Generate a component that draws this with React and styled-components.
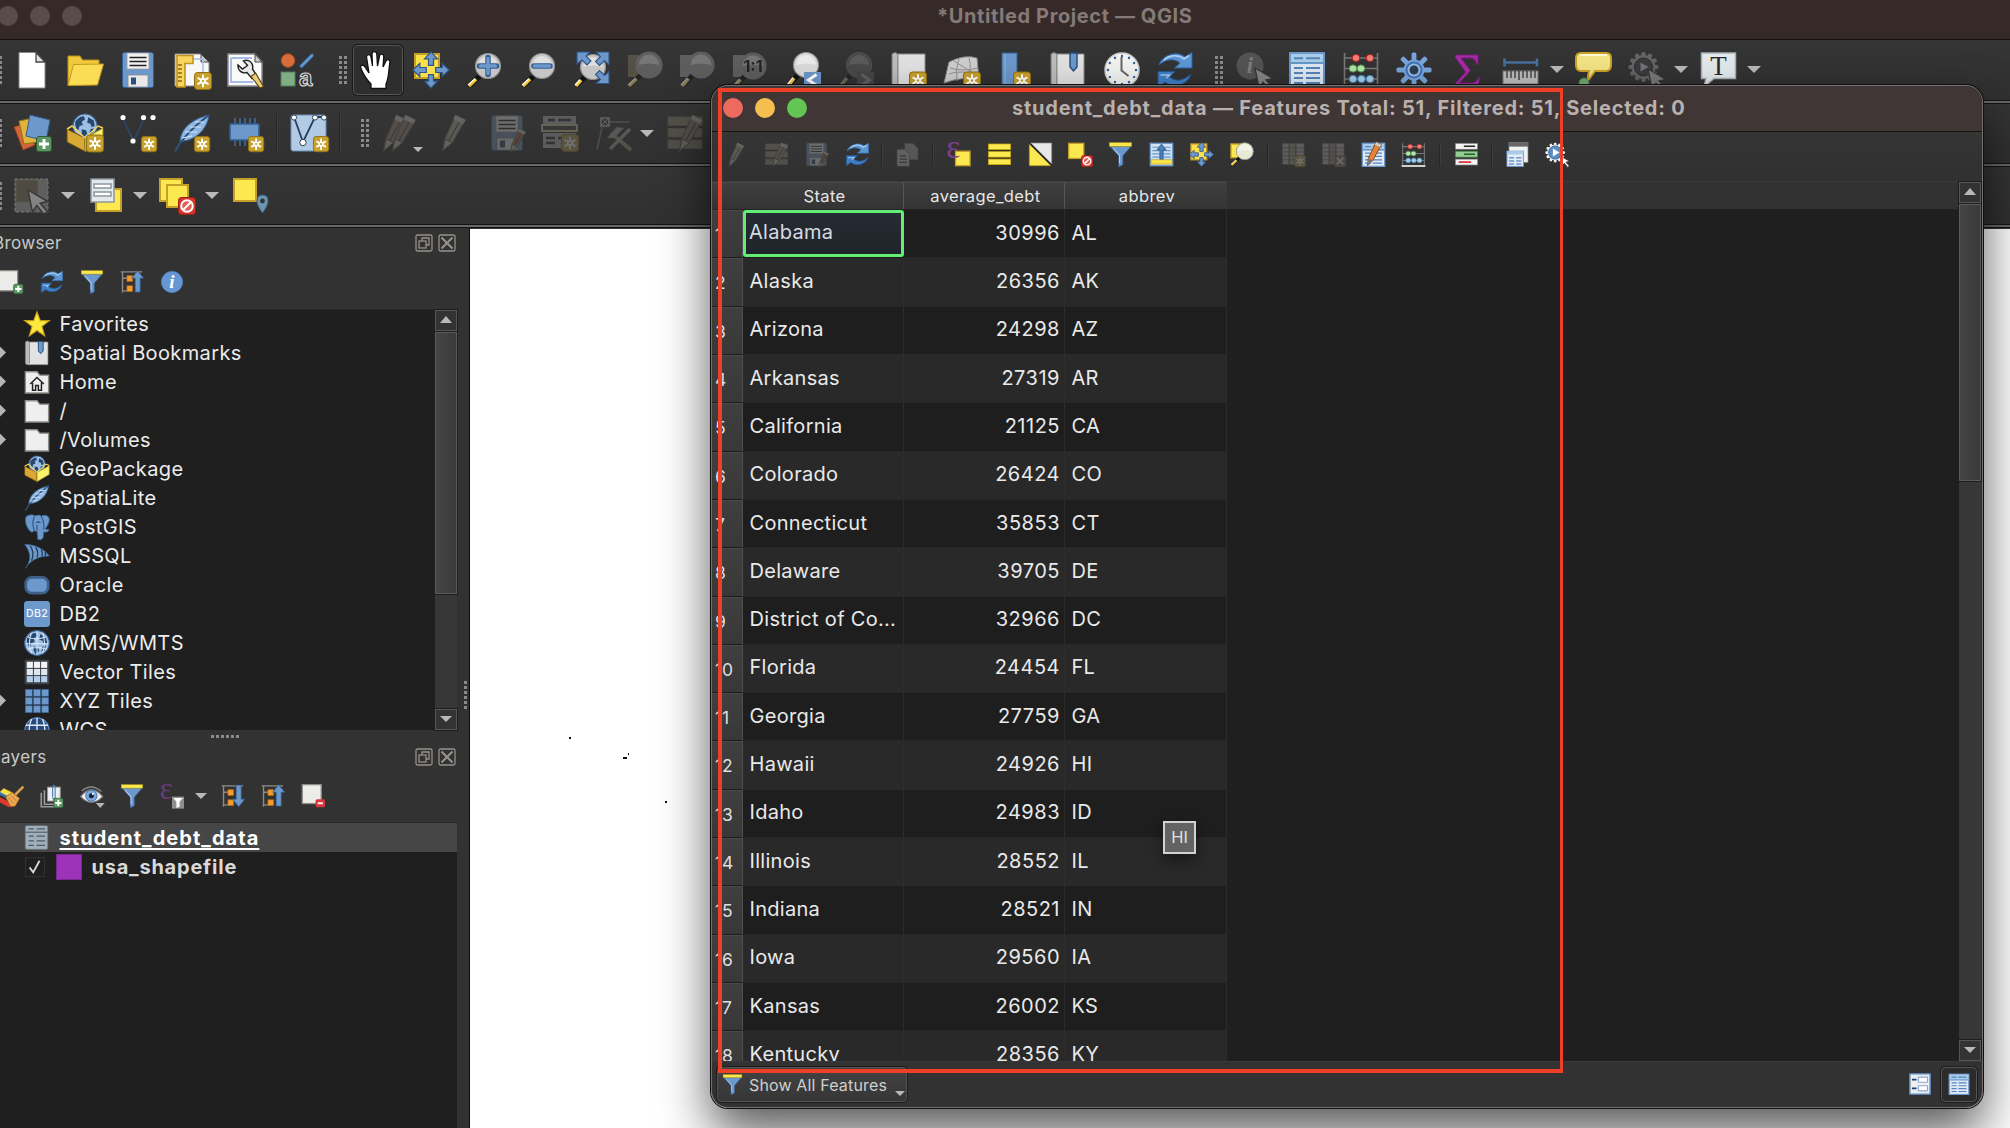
import React from 'react';
import styled, { createGlobalStyle, css } from 'styled-components';

const Global = createGlobalStyle`
  *, *::before, *::after { box-sizing: border-box; }
  html, body { margin: 0; padding: 0; background: #1f1f1f; overflow: hidden; }
  body { font-family: Inter, "Liberation Sans", sans-serif; color: #e6e6e6; }
`;

/* ---------- icon fragments, all on a 38 x 38 board ---------- */

const BLUE = '#6d98cb';
const DEEP = '#2f5585';

const Spark = ({ x = 20, y = 20.5, s = 1 }) => (
  <g transform={`translate(${x} ${y}) scale(${s})`}>
    <rect x="0.5" y="0.5" width="17" height="17" rx="3" fill="#c8a02c" stroke="#8f6f14" />
    <g stroke="#fff" strokeWidth="2" strokeLinecap="round">
      <path d="M9 3.4v11.2M4.2 6.200l9.600 5.600M13.800 6.200l-9.600 5.600" />
    </g>
    <circle cx="9" cy="9" r="3" fill="#fff" />
    <circle cx="9" cy="9" r="1.2" fill="#c8a02c" />
  </g>
);
const Plus = ({ x = 22, y = 22, s = 1 }) => (
  <g transform={`translate(${x} ${y}) scale(${s})`}>
    <rect x="0.5" y="0.5" width="15" height="15" rx="2.5" fill="#5b9661" stroke="#2f5c35" />
    <path d="M8 3v10M3 8h10" stroke="#fff" strokeWidth="3" />
  </g>
);
const NoEntry = ({ x = 20, y = 20, s = 1 }) => (
  <g transform={`translate(${x} ${y}) scale(${s})`}>
    <rect x="0.5" y="0.5" width="17" height="17" rx="3" fill="#d8352c" stroke="#9c1a14" />
    <circle cx="9" cy="9" r="5.8" fill="#e2605a" stroke="#fff" strokeWidth="2" />
    <path d="M5 13l8-8" stroke="#fff" strokeWidth="2" />
  </g>
);
const Lens = ({ cx = 23, cy = 15, r = 12.5, fill = '#c6c6c6' }) => (
  <>
    <path d={`M${cx - r * 0.6} ${cy + r * 0.75}L4 35`} stroke="#111" strokeWidth="5" />
    <path d={`M${cx - r * 0.95} ${cy + r * 1.05}L4 35`} stroke="#f4c533" strokeWidth="3.4" />
    <path d={`M${cx - r * 1.05} ${cy + r * 1.02}L3 34`} stroke="#fff" strokeWidth="1.2" />
    <circle cx={cx} cy={cy} r={r} fill={fill} stroke="#8f8f8f" strokeWidth="1.2" />
    <path d={`M${cx - r * 0.8} ${cy}A${r * 0.8} ${r * 0.8} 0 0 1 ${cx + r * 0.8} ${cy}Q${cx} ${cy - 3} ${cx - r * 0.8} ${cy}z`} fill="#fff" opacity=".45" />
  </>
);
const Pencil = ({ x = 0, body = '#b9a77c' }) => (
  <g transform={`translate(${x} 0)`}>
    <path d="M16.500 1l10 5-13 22.500L3.500 37 6 24.500z" fill={body} stroke="#6a6150" strokeWidth="1.2" />
    <path d="M16.500 1l10 5-2.300 4-9.800-5z" fill="#d8d4cc" />
    <path d="M20 8.500L9.500 27" stroke="#3d382c" strokeWidth="1" />
    <path d="M6 25l7.500 3.500L3.500 37z" stroke="#55503f" strokeWidth="1" fill="#cfcabd" />
  </g>
);
const Globe = ({ cx = 19, cy = 12, r = 11 }) => (
  <g transform={`translate(${cx} ${cy}) scale(${r / 11})`}>
    <circle r="11" fill="#9dbfe4" stroke="#3b6493" strokeWidth="1" />
    <path d="M-9-4c3-4 6-5 8-5l1 3-3 2 1 3-3 1-1 4-2-2-1-3zM3-8l5 3 1 5-3 1-1-3-3-1zM-3 3l4 1 1 3-3 3-2-3zM5 3l3-1-1 4-3 2z" fill="#26486f" />
  </g>
);
const Cursor = ({ x = 20, y = 18, fill = '#8c8c8c', edge = '#3a3a3a', s = 1 }) => (
  <path transform={`translate(${x} ${y}) scale(${s})`} d="M0 0l18 10.500-7 1.500 6.500 7.500-3 2.500-6.500-8-4 6z" fill={fill} stroke={edge} strokeWidth="1.3" />
);
const CrossArrows = () => (
  <g fill={BLUE} stroke={DEEP} strokeWidth="1.2">
    <path d="M19 0.8l6.5 7h-4v6.500h-5v-6.500h-4z" />
    <path d="M19 37.2l6.5-7h-4v-6.5h-5v6.5h-4z" />
    <path d="M0.8 19l7-6.5v4h6.500v5h-6.500v4z" />
    <path d="M37.2 19l-7-6.5v4h-6.500v5h6.500v4z" />
  </g>
);
const GearShape = ({ cx = 19, cy = 19, r = 10, teeth = 8, len = 7, w = 5, fill = BLUE, hole = '#333' }) => (
  <g>
    {Array.from({ length: teeth }, (_, i) => (
      <rect key={i} x={cx - w / 2} y={cy - r - len + 1} width={w} height={len + 2} rx="1.6" fill={fill} transform={`rotate(${(360 / teeth) * i} ${cx} ${cy})`} />
    ))}
    <circle cx={cx} cy={cy} r={r} fill={fill} />
    <circle cx={cx} cy={cy} r={r * 0.45} fill={hole} />
  </g>
);
const Abacus = () => (
  <>
    <path d="M2.5 2v34M35.5 2v34M2 7h34M2 17.5h34M2 28h34" stroke="#787878" strokeWidth="1.6" />
    <path d="M1 36.5h36" stroke="#cfcfcf" strokeWidth="3" />
    {[[14, 7, 'r'], [28, 7, 'r'], [11, 17.5, 'g'], [19, 17.5, 'g'], [11, 28, 'b'], [19.5, 28, 'b'], [28, 28, 'b']].map(([x, y, c]) => (
      <ellipse key={`${x}-${y}`} cx={x} cy={y} rx="3.8" ry="3.6" fill={{ r: '#f07f79', g: '#b3e6ab', b: '#a3cdea' }[c]} stroke={{ r: '#b81f1b', g: '#4f9a4a', b: '#4a86b4' }[c]} />
    ))}
  </>
);
const TableSheet = () => (
  <>
    <rect x="2" y="2" width="34" height="35" fill="#dfeaf6" stroke={BLUE} strokeWidth="2" />
    <rect x="3" y="3" width="32" height="8.5" fill="#a9cdea" />
    <path d="M3 12h32" stroke="#4c84bf" strokeWidth="1.6" />
    <path d="M6 7.2h9M18 7.2h14M6 17h9M18 17h14M6 22h9M18 22h14M6 27h9M18 27h14M6 32h9M18 32h14" stroke="#5585bb" strokeWidth="1.9" />
  </>
);
const Sync = () => (
  <>
    <path d="M3 14C6 4 21-1 29 6l7-4.500V17H18.500l5.500-5C18 7 10 8 3 14z" fill="#5d97d6" stroke="#2d65a4" />
    <path d="M35 23c-3 11-18 15-26 8l-7 5V20.500h17l-5.500 5.500c6 5 14 4 21.500-3z" fill="#3e7ec6" stroke="#24588f" />
    <path d="M8 9c5-5 14-6 20-1l5-3.500" fill="none" stroke="#b3d2f2" strokeWidth="1.6" />
    <path d="M4.500 24h9l-3 3" fill="none" stroke="#a4c8ee" strokeWidth="1.6" />
  </>
);
const Funnel = () => (
  <>
    <path d="M3 6.500h32L22.500 21v13.500l-6 3V21z" fill={BLUE} stroke="#3c6ba3" strokeWidth="1.2" />
    <path d="M8 9.500l9.500 11v12" fill="none" stroke="#b2cdea" strokeWidth="1.6" />
    <rect x="2" y="1" width="34" height="5.500" fill="#fbe64b" stroke="#b79b17" strokeWidth=".8" />
  </>
);
const Box = () => (
  <>
    <Globe cx={19} cy={12} r={12} />
    <path d="M1 15l18 9v13.500L1 28z" fill="#d9a936" stroke="#6b4d0c" />
    <path d="M37 14l-18 10v13.500L37 27z" fill="#fbf36b" stroke="#8b7b18" />
    <path d="M1 15l5-3 13 12M37 14l-5-2-13 12" fill="none" stroke="#efd25c" strokeWidth="1.5" />
  </>
);
const Feather = () => (
  <>
    <path d="M36 1C24 4 8 11 7 28l3-1C22 26 34 16 36 1z" fill="#8fb6e2" stroke="#3d6797" />
    <path d="M36 1C24 10 10 22 2 37.500" fill="none" stroke="#2c527d" strokeWidth="2" />
    <path d="M31 8l-9 0M28 13l-11 0M24 18l-12 0M19 22l-10 2" stroke="#d3e5f7" strokeWidth="1.2" />
  </>
);
const Folder = ({ children }) => (
  <>
    <path d="M2 4h17l4 5h13v26H2z" fill="#efefef" stroke="#8e8e88" strokeWidth="2" />
    {children}
  </>
);
const BookIcon = ({ tag }) => (
  <>
    <path d="M2 3q3-3 6 0V36H4q-2 0-2-3z" fill="#bdbdbd" stroke="#777" />
    <path d="M8 3h27v33H6q2-1 2-4z" fill="#e2e2e2" stroke="#8c8c8c" />
    {tag && <path d="M21 2h7v14l-3.500 4-3.500-4z" fill={BLUE} stroke="#234c7d" strokeWidth="1.400" />}
  </>
);
const TreeLines = () => (
  <>
    <path d="M1 3h34M4 3v33M4 13h8M4 33h8" stroke="#8b8b8b" strokeWidth="2.2" fill="none" />
    <rect x="11" y="9" width="9" height="9" fill="#f39b2d" stroke="#b86a10" />
    <rect x="11" y="25" width="9" height="9" fill="#f39b2d" stroke="#b86a10" />
  </>
);
const Save = () => (
  <>
    <rect x="3.500" y="1.500" width="31" height="35" rx="2" fill={BLUE} stroke="#2f5f96" />
    <rect x="8" y="2" width="22" height="16" fill="#f1f1f1" stroke="#999" strokeWidth=".8" />
    <path d="M10.500 6.500h17M10.500 10.500h17M10.500 14.500h17" stroke="#222" strokeWidth="1.400" />
    <rect x="9" y="24" width="20" height="12" fill="#e9e9e9" stroke="#888" strokeWidth=".8" />
    <rect x="12" y="26.500" width="5" height="7" fill="#27507f" />
  </>
);
const Rows = ({ fill = '#fce94f', edge = '#c4a000' }) => (
  <>
    {[3, 14.500, 26].map((y) => <rect key={y} x="2" y={y} width="34" height="8.500" fill={fill} stroke={edge} />)}
  </>
);
const Sq = ({ x, y, w = 22, h = 23 }) => (
  <rect x={x} y={y} width={w} height={h} fill="#fce94f" stroke="#c4a02a" strokeWidth="2" />
);

const ICONS = {
  newFile: <><path d="M6 1.500h17l9 9.500v26H6z" fill="#fff" stroke="#8a8a8a" /><path d="M23 1.500l0 9.500h9z" fill="#e3e3e3" stroke="#444" strokeWidth="1.300" /></>,
  open: <><path d="M2 34V5h12l2.500 4H33v7H9z" fill="#f0c83c" stroke="#b98f18" /><path d="M2 34.500L7.500 13.500 37.500 13l-6 21z" fill="#fbdc55" stroke="#c39a20" /></>,
  save: <Save />,
  newLayout: <><path d="M2 3h26l8 8v24H2z" fill="#f8f8f8" stroke="#8b8b8b" /><path d="M28 3v8h8z" fill="#ccc" stroke="#444" /><path d="M15 8h15v14" fill="none" stroke="#a7bce6" strokeWidth="1.500" /><path d="M4 4.500h16v8h-8V36H4z" fill="#f6d560" stroke="#c39318" strokeWidth="1.600" /><path d="M5 14h4M5 18h4M5 22h4M5 26h4M5 30h4" stroke="#8d6a10" strokeWidth="1.300" /><Spark x={21} y={21} /></>,
  wrench: <><path d="M2 3h27l7 8v24H2z" fill="#fafafa" stroke="#8b8b8b" strokeWidth="1.500" /><path d="M29 3v8h7z" fill="#ccc" stroke="#444" /><path d="M5 7h21M5 7v24h22" fill="none" stroke="#a7bce6" strokeWidth="2" /><path d="M17.500 10c5-2.500 10.500 2 9 8l4 6-4.500 3.500-5-6c-5 1.500-9.500-2-9-7.500l4.500 4 5-3.500z" fill="#e9e9e9" stroke="#222" strokeWidth="1.400" /><path d="M29.500 22l8 13.500-3.500 1.500-9-11.500z" fill="#ebcd78" stroke="#5b4a18" strokeWidth="1.200" /></>,
  style: <><ellipse cx="9" cy="9.500" rx="6.800" ry="6.800" fill="#d86c3a" stroke="#a34a20" /><path d="M33 4.500L22.500 15" stroke="#2f5f96" strokeWidth="4" strokeLinecap="round" /><path d="M33 4.500L22.500 15" stroke={BLUE} strokeWidth="2.400" strokeLinecap="round" /><rect x="2" y="21" width="14" height="14" fill="#7fae85" stroke="#4e7f55" /><text x="20" y="35" fontFamily="Liberation Sans, sans-serif" fontWeight="700" fontSize="24" fill="#333" stroke="#ddd" strokeWidth="1.100">a</text></>,
  hand: <path d="M12 37.500v-4.500C8 29 4.500 24 1.800 17c-1-3 2.500-4 4.200-1l4 6-2.500-16c0-3.300 4-3.300 4.500 0l1.500 9-.5-12c0-3.300 4.500-3.300 4.800 0l.7 12 2-10c.8-3 4.600-2.400 4.300 1l-.8 10 3-6c1.500-2.500 4.700-1.200 3.800 1.800C29.500 20 30 27 27 33v4.500z" fill="#fff" stroke="#111" strokeWidth="1.300" />,
  panSel: <><rect x="3" y="3" width="24" height="24" fill="#fbe04a" stroke="#c4a02a" strokeWidth="2" /><CrossArrows /></>,
  zoomIn: <><Lens /><path d="M23 6.500v17M14.500 15h17" stroke="#315c93" strokeWidth="5.500" strokeLinecap="round" /><path d="M23 7.500v15M15.500 15h15" stroke={BLUE} strokeWidth="3.400" strokeLinecap="round" /></>,
  zoomOut: <><Lens /><path d="M15 15h16" stroke="#315c93" strokeWidth="5.500" strokeLinecap="round" /><path d="M15.500 15h15" stroke={BLUE} strokeWidth="3.400" strokeLinecap="round" /></>,
  zoomFull: <><Lens cx={21} cy={16} r={12.5} /><g fill={BLUE} stroke={DEEP} strokeWidth="1.100"><path d="M5 1h13l-4 4 5 5-4 4-5-5-5 4z" /><path d="M37 1v13l-4.500-4.500-5 5-4-4 5-5-4.500-4.500z" /><path d="M37 32.500H24l4.500-4-5-5 4-4 5 5 4.500-4z" /></g></>,
  zoomSel: <><rect x="3" y="4" width="18" height="22" fill="#7b7148" /><Lens cx={24} cy={14} r={13} fill="#8d8d8d" /></>,
  zoomLayer: <><rect x="2" y="4" width="18" height="22" fill="#8d8d8d" /><Lens cx={23} cy={14} r={13} fill="#8d8d8d" /></>,
  zoomNative: <><rect x="2" y="4" width="18" height="22" fill="#8d8d8d" /><Lens cx={22} cy={15} r={13} fill="#8d8d8d" /><text x="22" y="21" textAnchor="middle" fontFamily="Inter, sans-serif" fontWeight="700" fontSize="16" fill="#111">1:1</text></>,
  zoomPrev: <><Lens cx={22} cy={14} r={12.5} fill="#dcdcdc" /><rect x="20" y="21" width="17" height="17" fill={BLUE} /><path d="M32.500 23.500l-8 5.500 8 5.500" fill="none" stroke="#fff" strokeWidth="3" /></>,
  zoomNext: <><Lens cx={22} cy={14} r={12.5} fill="#7d7d7d" /><rect x="20" y="21" width="17" height="17" fill="#6a7380" /><path d="M24.500 23.500l8 5.500-8 5.500" fill="none" stroke="#ccc" strokeWidth="3" /></>,
  newMap: <><BookIcon /><Spark x={19} y={20.5} /></>,
  new3d: <><path d="M6 11q16-8 28-4l2 22q-16-4-35 3z" fill="#cfcfcf" stroke="#888" /><path d="M7 17q12 4 28 0M6 23q10-4 29 0M16 8q-4 10-2 22M26 7q3 10-1 22M11 10l22 14" fill="none" stroke="#909090" /><Spark x={20} y={20.5} /></>,
  newBookmark: <><path d="M6 2h15v30l-7.500 6H6z" fill={BLUE} stroke="#35659c" /><path d="M9 3v31" stroke="#8fb4dd" /><Spark x={17} y={20.5} /></>,
  bookmarks: <BookIcon tag />,
  clock: <><circle cx="19" cy="19" r="17" fill="#f3f3f1" stroke="#c9c9c9" strokeWidth="1.500" />{Array.from({ length: 12 }, (_, i) => <circle key={i} cx="19" cy="5" r="1.200" fill="#2c5f9e" transform={`rotate(${i * 30} 19 19)`} />)}<path d="M18.500 6v13.500l7 5.500" fill="none" stroke="#666" strokeWidth="2" /></>,
  sync: <Sync />,
  identify: <><circle cx="15" cy="15" r="13.500" fill="#777" /><text x="15" y="22" textAnchor="middle" fontFamily="Liberation Serif, serif" fontStyle="italic" fontWeight="700" fontSize="23" fill="#ccc">i</text><Cursor x={20} y={17} fill="#ddd" /></>,
  table: <TableSheet />,
  abacus: <Abacus />,
  gear: <><GearShape r={10.5} len={8} w={4.8} fill="#78a5dc" hole="#2d3e55" /><circle cx="19" cy="19" r="7.500" fill="none" stroke="#3f74b3" strokeWidth="2" /><circle cx="19" cy="19" r="5.500" fill="none" stroke="#9fc0e8" strokeWidth="1.500" /></>,
  sigma: <path d="M7.500 4H30v9.500h-1.500C27.500 8 25 7 21 7h-8l9.500 12.500L11.500 32H23c4 0 6-2 7.500-5.500H32L29.500 36H6v-2l11.500-13L7 6z" fill="#a62ca6" stroke="#7b1a7b" />,
  ruler: <><path d="M2 11.500h33M2.500 7.500v8M35 7.500v8" stroke="#49709e" strokeWidth="2.500" /><rect x="1" y="20" width="35" height="13" fill="#bdbdbd" stroke="#777" /><path d="M5 20v7M9 20v7M13 20v7M17 20v9M21 20v7M25 20v7M29 20v7M33 20v7" stroke="#333" strokeWidth="1.300" /></>,
  bubble: <><path d="M6 2h25q5 0 5 5v7q0 6-5 6H20l-8 11 2-11H6q-5 0-5-6V7q0-5 5-5z" fill="#f3e486" stroke="#c9a227" strokeWidth="2" /><path d="M5 4h27" stroke="#fffbd9" strokeWidth="1.800" /><ellipse cx="9" cy="32" rx="5" ry="5" fill="#72a873" stroke="#4b7a4c" /></>,
  action: <><GearShape cx={15.5} cy={16} r={12} teeth={12} len={4} w={4.2} fill="#999" hole="#777" /><circle cx="15.500" cy="16" r="9" fill="#3f4650" stroke="#222" /><path d="M12.500 11.500l8 4.500-8 4.500z" fill="#bbb" /><Cursor x={20} y={18} fill="#c4c4c4" /></>,
  textNote: <><path d="M1.500 2h34v25.500H14L4 36l2-8.500H1.500z" fill="#e4e9ec" stroke="#a9b1b5" strokeWidth="1.500" /><text x="18.500" y="24" textAnchor="middle" fontFamily="Liberation Serif, serif" fontSize="27" fill="#2b2b2b">T</text></>,
  addLayers: <><path d="M1 13l12-4 9 22-12 5z" fill="#d0673a" stroke="#8f3d1a" /><path d="M6 7l14-3 5 24-14 2z" fill="#e0b33c" stroke="#90701a" /><path d="M17 1l20 5-4 21-20-5z" fill={BLUE} stroke="#355f92" /><Plus x={23} y={22} /></>,
  geopackageNew: <><Box /><Spark x={20} y={20.5} /></>,
  shapeNew: <><path d="M4 5L14 26M15 26L25 5" stroke="#2d4764" strokeWidth="1.800" /><circle cx="4" cy="3.500" r="2.600" fill="#fff" /><circle cx="14" cy="27" r="2.600" fill="#fff" /><circle cx="24.500" cy="3.500" r="2.600" fill="#fff" /><circle cx="34" cy="3.500" r="2.600" fill="#fff" /><Spark x={22} y={22} s={0.9} /></>,
  featherNew: <><Feather /><Spark x={21} y={22} s={0.9} /></>,
  memory: <><path d="M9 4v28M14 4v28M19 4v28M24 4v28M29 4v28" stroke="#456a95" strokeWidth="1.600" /><rect x="4" y="10" width="29" height="16" rx="1" fill={BLUE} stroke="#2f5f96" strokeWidth="1.600" /><Spark x={22} y={22} s={0.9} /></>,
  meshNew: <><rect x="1" y="1" width="35" height="36" rx="2" fill="#b3cae4" stroke="#6a8db5" /><path d="M4 3l9 25L25 3h9" fill="none" stroke="#23405f" strokeWidth="1.800" /><circle cx="4" cy="3.500" r="2.600" fill="#fff" stroke="#345" /><circle cx="25" cy="3.500" r="2.600" fill="#fff" stroke="#345" /><circle cx="34" cy="3.500" r="2.600" fill="#fff" stroke="#345" /><circle cx="13" cy="28.500" r="3.200" fill="#fff" stroke="#345" /><Spark x={23} y={22} s={0.9} /></>,
  pencils: <><Pencil x={-2} body="#a98a78" /><Pencil x={7} body="#a98a78" /></>,
  pencil: <Pencil x={4} body="#b9b08c" />,
  saveEdit: <><Save /><g transform="translate(19 14) scale(.65)"><Pencil body="#c06a4a" x={2} /></g></>,
  addRecord: <><rect x="2" y="2" width="33" height="8" fill="#bbb" /><rect x="1" y="11" width="35" height="6" fill="#444" stroke="#e0d080" strokeWidth="2" /><rect x="2" y="19" width="33" height="15" fill="#bbb" /><path d="M7 6h7M17 6h13M5 24h9M17 24h10M5 29h9" stroke="#333" strokeWidth="2.400" /><Spark x={20} y={20} /></>,
  digitize: <><path d="M3 36L8 13M14 8h22" stroke="#8a8a8a" strokeWidth="1.500" /><rect x="7" y="4" width="8" height="8" fill="none" stroke="#ccc" strokeWidth="1.500" /><path d="M7 4l8 8M15 4l-8 8" stroke="#ccc" /><path d="M17 19l20 17" stroke="#a89a68" strokeWidth="4" /><path d="M36 15L16 35" stroke="#aaa" strokeWidth="3.500" /><path d="M13 24l10-11 7 1-10 10z" fill="#aaa" /></>,
  multiEdit: <><Rows fill="#9b9472" edge="#857c50" /><g transform="translate(10 0)"><Pencil body="#a98a78" /></g></>,
  selectRect: <><rect x="2" y="2" width="33" height="33" fill="#8e8e8e" stroke="#c2c2c2" strokeDasharray="3 2" /><rect x="3" y="3" width="22" height="22" fill="#6f6846" stroke="#8d865a" /><Cursor x={15} y={13} fill="#ddd" s={1.1} /></>,
  selectForm: <><Sq x={9} y={12} w={25} h={22} /><rect x="4" y="2" width="23" height="23" fill="#e3e9ec" stroke="#8c979e" strokeWidth="1.500" /><path d="M7 7h17v4H7zM7 15h17v4H7z" fill="#fff" stroke="#8c979e" strokeWidth="1.500" /></>,
  deselect: <><Sq x={1} y={2} w={22} h={22} /><Sq x={8} y={8} w={21} h={22} /><NoEntry x={19} y={20} /></>,
  selectLoc: <><Sq x={2} y={2} w={22} h={22} /><path d="M30.500 18q6 0 5.500 7-.5 4-5.500 11-5-7-5.500-11-.5-7 5.500-7z" fill="#6b95b3" stroke="#3d627e" /><circle cx="30.500" cy="24" r="2.400" fill="#333" /></>,
  star: <path d="M19 1l4.800 13h13.400L26.300 22.500l4 14L19 28.500l-11.300 8 4-14L.8 14h13.400z" fill="#fbe93f" stroke="#c39b17" strokeWidth="1.600" />,
  home: <Folder><path d="M9 22L19 12.500 29 22M12.500 20v11h4.500v-7h4v7h4.500V20" fill="none" stroke="#222" strokeWidth="2.200" /></Folder>,
  folder: <Folder />,
  geopackage: <Box />,
  feather: <Feather />,
  elephant: <><path d="M3 4C8 0 14 1 16 3c3-2 7-2 9 0 6-3 12 0 12 5 0 6-4 11-6 14l6 1c-2 4-6 4-8 3l-1 9q-4 5-8 2l-1-12c-2 1-3 0-4-1l-3 3C5 24 0 11 3 4z" fill={BLUE} stroke="#35608f" strokeWidth="1.200" /><path d="M15 4q-4 10 0 20M25 3q5 8 4 20M18 13q3-3 6 0M19 16v8" fill="none" stroke="#28507e" strokeWidth="1.500" /></>,
  mssql: <><path d="M1 2c14 0 28 6 36 17-12 0-26 4-35 18C12 25 9 12 1 2z" fill={BLUE} stroke="#35608f" /><path d="M9 4q7 10 2 22M17 6q5 8 2 15M25 9q3 6 1 10M31 13q1 3 0 6" fill="none" stroke="#1f3652" strokeWidth="1.800" /></>,
  oracle: <rect x="2.500" y="8" width="33" height="23" rx="9" fill={BLUE} stroke="#3e5f87" strokeWidth="4" />,
  db2: <><rect x="0" y="0" width="38" height="38" rx="5" fill={BLUE} /><text x="19" y="23.500" textAnchor="middle" fontFamily="Inter, sans-serif" fontWeight="500" fontSize="15.500" fill="#f4f7fb">DB2</text></>,
  wms: <><Globe cx={19} cy={19} r={18} /><path d="M5 10q12 6 28 0M3 20h32M5 28q14-5 28 0M19 2v34M11 4q-6 15 0 30M27 4q6 15 0 30" fill="none" stroke="#dbe9f7" strokeWidth="1.500" /></>,
  vtiles: <><rect x="1" y="1" width="36" height="36" fill="#3c4148" />{[0, 1, 2].map((r) => [0, 1, 2].map((c) => <rect key={`${r}${c}`} x={4 + c * 10.5} y={4 + r * 10.5} width="9" height="9" fill={['#f4f4f6', '#dfe8f2', '#b4cfe9'][r]} />))}</>,
  xyz: <>{[0, 1, 2].map((r) => [0, 1, 2].map((c) => <rect key={`${r}${c}`} x={2 + c * 12} y={2 + r * 12} width="10" height="10" fill={BLUE} stroke="#39659b" strokeWidth=".8" />))}</>,
  wcs: <><circle cx="19" cy="19" r="17.500" fill="#27497a" stroke="#5e8cc2" strokeWidth="2" /><path d="M3 12h32M1 20h36M19 1v36M11 3q-7 16 0 32M27 3q7 16 0 32" fill="none" stroke="#dfe9f5" strokeWidth="2" /></>,
  addBrowser: <><rect x="-4" y="1" width="32" height="32" fill="#ececea" stroke="#8b8b84" strokeWidth="2" /><Plus x={21} y={22} /></>,
  funnel: <Funnel />,
  collapse: <><TreeLines /><path d="M28 1l9.500 12h-5.500v22h-8V13h-5.500z" fill={BLUE} stroke="#2f5f96" strokeWidth="1.200" /></>,
  expand: <><TreeLines /><path d="M28 36l9.500-12h-5.500V2h-8v22h-5.500z" fill={BLUE} stroke="#2f5f96" strokeWidth="1.200" /></>,
  info: <><circle cx="19" cy="19" r="17" fill="#6797d3" stroke="#4475b1" /><text x="19" y="29" textAnchor="middle" fontFamily="Liberation Serif, serif" fontStyle="italic" fontWeight="700" fontSize="30" fill="#fff">i</text></>,
  brush: <><path d="M-2 14l8-7 14 7-6 8z" fill="#f8e24b" stroke="#c9a227" /><path d="M-2 14l14 7 3-3" stroke="#3d74b3" strokeWidth="4" fill="none" /><path d="M-2 20l16 8 6 6-6 3-16-9z" fill="#dc3a2d" /><path d="M9 21l10-8 12 10-7 12-7 1z" fill="#eba850" stroke="#a0601c" /><path d="M13 22l9 9M17 18l9 9" stroke="#b87524" strokeWidth="1.200" /><path d="M24 17L37 4" stroke="#dba24b" strokeWidth="4" /></>,
  group: <><path d="M2 14v22h20M7 10v22h20" fill="none" stroke="#9b9b9b" strokeWidth="2.500" /><rect x="12" y="5" width="20" height="22" fill="#efefef" stroke="#999" strokeWidth="1.500" /><path d="M20 20V4q2-4 4 0v18q-4 4-4-1" fill="none" stroke="#4f7fb8" strokeWidth="1.800" /><Plus x={21} y={22} /></>,
  eye: <><path d="M1 20Q18-2 36 20 18 38 1 20z" fill="#f0f0f0" stroke="#777" strokeWidth="2" /><circle cx="18" cy="18.500" r="9" fill="#7ca8dd" stroke="#3f6b9f" strokeWidth="1.500" /><circle cx="18" cy="18.500" r="4" fill="#16263c" /><circle cx="20.500" cy="15.500" r="1.800" fill="#fff" /><path d="M3 11Q18-2 34 12" fill="none" stroke="#888" strokeWidth="2" /><path d="M25 30h14l-7 8z" fill="#b5b5b5" /></>,
  epsFilter: <><text x="-1" y="23" fontFamily="Liberation Serif, serif" fontWeight="400" fontSize="50" fill="#6b3a78">ε</text><rect x="19" y="20" width="19" height="19" fill="#8f8f8f" /><path d="M21 22h15l-5 6v8l-5 2v-10z" fill="#fff" /></>,
  removeLayer: <><rect x="2" y="1" width="30" height="30" fill="#ececea" stroke="#8b8b84" strokeWidth="2" /><rect x="23" y="24" width="15" height="13" rx="3" fill="#d9363a" /><path d="M26.500 30.500h8" stroke="#fff" strokeWidth="3" /></>,
  attrLayer: <><rect x="2" y="1" width="34" height="36" rx="2" fill="#9fafbb" stroke="#6b7b87" /><path d="M2 11h34" stroke="#5d6b76" strokeWidth="2" /><path d="M7 6h8M19 6h13M7 17h8M19 17h13M7 24h8M19 24h13M7 31h8M19 31h13" stroke="#4e5b66" strokeWidth="2" /></>,
  copy: <><path d="M15 2h12l8 8v17H15z" fill="#aaa" stroke="#666" /><path d="M3 11h12l7 7v19H3z" fill="#ccc" stroke="#555" /><path d="M7 21h10M7 26h11M7 31h11" stroke="#444" strokeWidth="2" /></>,
  epsSelect: <><Sq x={13} y={14} w={22} h={22} /><text x="-1" y="24" fontFamily="Liberation Serif, serif" fontSize="50" fill="#7d3f8d">ε</text></>,
  selectAll: <Rows />,
  invert: <><path d="M2 3v33h33z" fill="#fce94f" stroke="#a98f1f" /><path d="M4 1.500h32v32z" fill="#e7e7e7" stroke="#888" /><path d="M3 2.500l33 33" stroke="#222" strokeWidth="1.800" /></>,
  deselectOne: <><Sq x={1} y={2} w={23} h={23} /><NoEntry x={20} y={20} /></>,
  moveTop: <><rect x="2" y="2" width="34" height="34" fill="#cfe2f5" stroke={BLUE} strokeWidth="2" /><path d="M5 8h28M5 13h28M5 18h28M5 23h28" stroke="#6c96c7" strokeWidth="1.800" /><rect x="3" y="27" width="32" height="6.500" fill="#fbe54b" stroke="#b99c1a" /><path d="M19 3l7 9h-4.500v14h-5V12H12z" fill="#4d80ba" stroke="#234c7d" /></>,
  zoomSelOn: <><Sq x={3} y={3} w={17} h={21} /><Lens cx={24} cy={14} r={13} fill="#e9e9d6" /></>,
  newField: <><rect x="2" y="2" width="10" height="32" fill="#bbb" stroke="#666" /><rect x="13" y="2" width="9" height="32" fill="#a3a77d" stroke="#666" /><rect x="23" y="2" width="12" height="32" fill="#bbb" stroke="#666" /><path d="M3 9h31M3 15h31M3 21h31M3 27h31" stroke="#555" /><Spark x={20} y={20} /></>,
  delField: <><rect x="2" y="2" width="10" height="32" fill="#bbb" stroke="#666" /><rect x="13" y="2" width="9" height="32" fill="#b18d8b" stroke="#666" /><rect x="23" y="2" width="12" height="32" fill="#bbb" stroke="#666" /><path d="M3 9h31M3 15h31M3 21h31M3 27h31" stroke="#555" /><rect x="20" y="20" width="18" height="18" rx="3" fill="#a06a68" /><path d="M24 24l10 10M34 24L24 34" stroke="#ddd" strokeWidth="3" /></>,
  editTable: <><TableSheet /><path d="M23 0l8 4-13 24-8 8 1-11z" fill="#e0853b" stroke="#8a3f10" strokeWidth="1.400" /><path d="M11 25l7 3-8 8z" fill="#777" /><path d="M23 0l8 4-2 4-8-4z" fill="#c9c9c9" /></>,
  condFormat: <><rect x="2" y="2" width="34" height="9" fill="#f4f4f4" stroke="#777" /><rect x="2" y="14" width="34" height="9" fill="#93cf94" stroke="#3f7e43" /><rect x="2" y="26" width="34" height="9" fill="#f4f4f4" stroke="#777" /><path d="M15 6.500h17" stroke="#222" strokeWidth="2.200" /><path d="M15 18.500h17" stroke="#2c5a2f" strokeWidth="2.200" /><path d="M7 30.500h19" stroke="#d9363a" strokeWidth="2.600" /></>,
  dock: <><rect x="6" y="1" width="29" height="30" fill="#f1f1f1" stroke="#777" /><rect x="6" y="1" width="29" height="6" fill="#666" /><rect x="3" y="14" width="25" height="23" fill="#e5eef7" stroke={BLUE} strokeWidth="1.500" /><rect x="3" y="14" width="25" height="5" fill="#a9cdea" /><path d="M6 24h8M17 24h8M6 29h8M17 29h8M6 33.500h8M17 33.500h8" stroke="#6c96c7" strokeWidth="2.200" /></>,
  actionOn: <><GearShape cx={15.5} cy={16} r={12} teeth={12} len={4} w={4.2} fill="#f2f2f2" hole="#f2f2f2" /><circle cx="15.500" cy="16" r="10" fill="#5c8cc4" stroke="#3d6ba1" strokeWidth="1.500" /><path d="M12 10l10 6-10 6z" fill="#fff" /><Cursor x={23} y={21} fill="#fff" edge="#222" s={0.8} /></>,
  form: <><rect x="1.500" y="1.500" width="35" height="35" fill="#efefef" stroke="#5f8cc2" strokeWidth="2.400" /><rect x="16" y="7" width="16" height="9" rx="1" fill="#fff" stroke="#86a8d3" strokeWidth="2" /><rect x="16" y="22" width="16" height="9" rx="1" fill="#fff" stroke="#86a8d3" strokeWidth="2" /><path d="M5 11.500h8M5 26.500h8" stroke="#23405f" strokeWidth="3" /></>,
};

const Svg = styled.svg`
  flex: none;
  display: block;
  width: ${(p) => p.$size}px;
  height: ${(p) => p.$size}px;
  overflow: visible;
  ${(p) => p.$dim && css`opacity: ${p.$dim}; filter: saturate(0.6);`}
`;
const Icon = ({ name, size = 38, dim }) => (
  <Svg viewBox="0 0 38 38" $size={size} $dim={dim} aria-hidden="true">{ICONS[name]}</Svg>
);

/* ---------- desktop and main window ---------- */

const Screen = styled.div`
  position: relative;
  width: 2010px;
  height: 1128px;
  overflow: hidden;
  background: #323232;
`;
const MainWindow = styled.div`
  display: flex;
  flex-direction: column;
  height: 100%;
`;
const MainTitle = styled.header`
  display: flex;
  align-items: center;
  height: 40px;
  flex: none;
  background: #362a29;
  border-bottom: 1px solid #141010;
`;
const Lights = styled.div`
  display: flex;
  gap: 12px;
  padding-left: ${(p) => p.$pad}px;
  margin-top: ${(p) => p.$shift || 0}px;
`;
const Light = styled.span`
  width: 20px;
  height: 20px;
  border-radius: 50%;
  flex: none;
  background: ${(p) => p.$color};
  ${(p) => p.$cut && css`margin-left: -2px;`}
`;
const TitleText = styled.h1`
  margin: ${(p) => p.$m};
  font-size: 20px;
  line-height: 26px;
  font-weight: 700;
  white-space: nowrap;
  letter-spacing: ${(p) => p.$ls}px;
  color: ${(p) => p.$color};
`;
const Toolbar = styled.div`
  display: flex;
  align-items: center;
  flex: none;
  height: ${(p) => p.$h}px;
  padding-bottom: ${(p) => p.$pb || 0}px;
  background: linear-gradient(#353535, #303030);
`;
const Divider = styled.div`
  height: 4px;
  flex: none;
  background: linear-gradient(#141414 0 1px, #686868 1px 3px, #141414 3px 4px);
`;
const Slot = styled.span`
  display: flex;
  justify-content: center;
  align-items: center;
  flex: none;
  width: ${(p) => p.$w}px;
`;
const ActiveTool = styled.span`
  display: flex;
  justify-content: center;
  align-items: center;
  flex: none;
  width: 50px;
  height: 50px;
  margin: 0 2px 0 0;
  background: #2e2e2e;
  border: 1.500px solid #555;
  border-radius: 5px;
  box-shadow: 0 0 0 1px #1a1a1a;
`;
const Grip = styled.span`
  flex: none;
  width: ${(p) => p.$w || 8}px;
  height: ${(p) => p.$h || 28}px;
  margin: ${(p) => p.$m || 0};
  background: repeating-linear-gradient(90deg, #8a8a8a 0 3px, transparent 3px 5px);
  mask: repeating-linear-gradient(0deg, #000 0 3px, transparent 3px 5px);
`;
const Caret = styled.i`
  flex: none;
  width: 0;
  height: 0;
  margin: ${(p) => p.$m || 0};
  border: ${(p) => p.$s || 6}px solid transparent;
  border-top-color: #b9b9b9;
  border-bottom: 0;
  ${(p) => p.$up && css`border-top: 0; border-bottom: 7px solid #b9b9b9;`}
`;
const Sep = styled.i`
  flex: none;
  width: 2px;
  height: ${(p) => p.$h}px;
  margin: ${(p) => p.$m};
  background: linear-gradient(90deg, #262626 50%, #3d3d3d 50%);
`;
const Split = styled.span`
  position: relative;
  display: flex;
  > i { position: absolute; right: -3px; bottom: 0; }
`;
const Work = styled.div`
  display: flex;
  flex: 1;
  min-height: 0;
`;
const SidePanel = styled.aside`
  display: flex;
  flex-direction: column;
  flex: none;
  width: 457px;
`;
const VSplitter = styled.div`
  display: flex;
  align-items: center;
  flex: none;
  width: 13px;
  padding: 34px 0 0 7px;
  border-right: 1px solid #0c0c0c;
`;
const Canvas = styled.main`
  position: relative;
  flex: 1;
  margin-top: 1px;
  background: #fff;
`;
const Speck = styled.i`
  position: absolute;
  left: ${(p) => p.$x}px;
  top: ${(p) => p.$y}px;
  width: ${(p) => p.$w || 2}px;
  height: ${(p) => (p.$w === 4 ? 1.5 : 2)}px;
  background: #111;
`;
const DockTitle = styled.div`
  display: flex;
  align-items: center;
  gap: 5px;
  flex: none;
  height: ${(p) => p.$h}px;
  padding-right: 1px;
  font-size: 17px;
  color: #c9c9c9;
  letter-spacing: 0.35px;
  > b { flex: 1; font-weight: 400; margin-left: ${(p) => p.$pull}px; }
`;
const DockButton = styled.svg`
  width: 18px;
  height: 18px;
  display: block;
`;
const DockTools = styled.div`
  display: flex;
  align-items: center;
  gap: 16px;
  flex: none;
  height: ${(p) => p.$h}px;
  padding-bottom: ${(p) => p.$pb}px;
`;
const ListFrame = styled.div`
  display: flex;
  flex: none;
  height: ${(p) => p.$h}px;
  background: #1f1f1f;
  border-top: 1px solid #292929;
`;
const Tree = styled.ul`
  list-style: none;
  flex: 1;
  margin: 0;
  padding: 0;
  overflow: hidden;
`;
const TreeRow = styled.li`
  display: flex;
  align-items: center;
  height: 29px;
  font-size: 20px;
  letter-spacing: 0.38px;
  color: #ececec;
  white-space: nowrap;
  &:first-child { height: 28px; }
`;
const Expander = styled.i`
  flex: none;
  width: 24px;
  height: 12px;
  background: ${(p) => (p.$on ? '#b5b5b5' : 'transparent')};
  clip-path: polygon(0 0, 6px 50%, 0 100%);
`;
const Label = styled.span`
  margin-left: 9.500px;
`;
const ScrollTrack = styled.div`
  display: flex;
  flex-direction: column;
  flex: none;
  width: ${(p) => p.$w || 22}px;
  background: #373737;
`;
const ScrollButton = styled.div`
  display: flex;
  align-items: center;
  justify-content: center;
  height: 21px;
  flex: none;
  padding-bottom: 2px;
  background: #333;
  border: 1.500px solid #565656;
  outline: 1px solid #1e1e1e;
`;
const Thumb = styled.div`
  flex: none;
  height: ${(p) => p.$h}px;
  margin: 1px 0 auto;
  background: linear-gradient(90deg, #454545, #3a3a3a);
  border: 1px solid #5b5b5b;
  box-shadow: 0 0 0 1px #1e1e1e;
`;
const HSplitter = styled.div`
  display: flex;
  justify-content: center;
  align-items: center;
  flex: none;
  height: 12px;
  padding-right: 8px;
`;
const LayerTree = styled.div`
  flex: 1;
  background: #1f1f1f;
  border-top: 1px solid #292929;
`;
const LayerRow = styled.div`
  display: flex;
  align-items: center;
  height: 29px;
  padding-left: 24px;
  font-size: 20px;
  font-weight: 700;
  letter-spacing: ${(p) => p.$ls}px;
  color: ${(p) => (p.$active ? '#fff' : '#d9d9d9')};
  background: ${(p) => (p.$active ? '#464646' : 'transparent')};
  > span { margin-left: 10.500px; ${(p) => p.$active && css`text-decoration: underline; text-decoration-thickness: 2px; text-underline-offset: 3px; text-decoration-skip-ink: none;`} }
`;
const Check = styled.svg`
  width: 20px;
  height: 20px;
  flex: none;
  margin-left: 1px;
  border: 1px solid #303030;
`;
const Swatch = styled.i`
  flex: none;
  width: 26px;
  height: 26px;
  margin: 0 -1px 0 11px;
  background: #9c33b8;
  border: 1px solid #7a2792;
`;

/* ---------- attribute table window ---------- */

const WindowShade = styled.div`
  position: absolute;
  left: 711px;
  top: 85px;
  width: 1272px;
  height: 1023px;
  border-radius: 17px;
  box-shadow: 0 0 0 1px #111, 0 24px 50px rgba(0, 0, 0, 0.66);
`;
const TableWindow = styled.section`
  position: absolute;
  left: 711px;
  top: 85px;
  width: 1272px;
  height: 1023px;
  display: flex;
  flex-direction: column;
  overflow: hidden;
  background: #323232;
  border: 1px solid #73706f;
  border-radius: 17px;
`;
const TableTitle = styled.header`
  display: flex;
  align-items: center;
  flex: none;
  height: 46px;
  padding-bottom: 1px;
  background: #403635;
  border-bottom: 1px solid #191414;
`;
const TableArea = styled.div`
  display: flex;
  flex: none;
  height: 880px;
  padding-right: 1px;
  border-top: 1px solid #3b3b3b;
`;
const GridArea = styled.div`
  flex: 1;
  overflow: hidden;
  background: #1f1f1f;
`;
const HeadRow = styled.div`
  display: grid;
  grid-template-columns: 31px 161px 161px 162px;
  height: 28px;
  background: #323232;
  border-bottom: 1px solid #222;
`;
const HeadCell = styled.div`
  display: flex;
  align-items: center;
  justify-content: center;
  padding-left: ${(p) => p.$nudge || 0}px;
  font-size: 16.500px;
  letter-spacing: 0.4px;
  color: #e6e6e6;
  background: linear-gradient(#3e3e3e, #343434);
  border-top: 1px solid #4b4b4b;
  border-right: ${(p) => (p.$plain ? 0 : 1)}px solid #565656;
`;
const DataRow = styled.div`
  display: grid;
  grid-template-columns: 31px 161px 161px 162px;
  width: 515px;
  height: 48.320px;
  background: ${(p) => (p.$alt ? '#292929' : '#1e1e1e')};
`;
const RowNo = styled.div`
  padding: 12px 0 0 3px;
  font-size: 17.500px;
  line-height: 24px;
  color: #dedede;
  background: linear-gradient(#3f3f3f, #383838);
  border-top: 1px solid #4a4a4a;
  border-bottom: 1px solid #1c1c1c;
  border-right: 1px solid #505050;
`;
const Cell = styled.div`
  display: flex;
  align-items: center;
  justify-content: ${(p) => (p.$right ? 'flex-end' : 'flex-start')};
  padding: 0 ${(p) => (p.$right ? 4 : 0)}px 2px 6.500px;
  font-size: 20px;
  letter-spacing: ${(p) => (p.$right ? 0.5 : 0.3)}px;
  color: #e9e9e9;
  white-space: nowrap;
  border-right: 1px solid #2c2c2c;
  border-bottom: 1px solid #272727;
  ${(p) => p.$sel && css`
    background: linear-gradient(#262c33, #1f242a);
    border: 3.500px solid #62ee74;
    border-radius: 3px;
    margin: 0 0 1px 0;
    padding: 0 0 3px 3px;
    color: #d5dce2;
  `}
`;
const Foot = styled.footer`
  display: flex;
  align-items: center;
  flex: 1;
  padding: 0 5px 1px 5px;
  border-top: 1px solid #393939;
`;
const ShowAll = styled.div`
  display: flex;
  align-items: center;
  width: 190px;
  height: 35px;
  margin-right: auto;
  padding-left: 4px;
  font-size: 16px;
  letter-spacing: 0.15px;
  color: #cfcfcf;
  background: linear-gradient(#424242, #363636);
  border: 1.500px solid #545454;
  border-radius: 4px;
  outline: 1px solid #1c1c1c;
  > span { flex: 1; margin: 2px 0 0 6px; }
`;
const ViewToggle = styled.div`
  display: flex;
  align-items: center;
  justify-content: center;
  width: 36px;
  height: 35px;
  ${(p) => p.$on && css`
    background: #2b2b2b;
    border: 1.500px solid #565656;
    border-radius: 4px;
    outline: 1px solid #1c1c1c;
  `}
`;
const DragTag = styled.div`
  position: absolute;
  left: 1163px;
  top: 821px;
  width: 33px;
  height: 33px;
  display: flex;
  align-items: center;
  justify-content: center;
  padding-bottom: 1px;
  font-size: 16.500px;
  color: #e0e0e0;
  background: #636363;
  border: 2px solid #d2d2d2;
  box-shadow: 0 6px 16px rgba(0, 0, 0, 0.45);
`;
const RedFrame = styled.div`
  position: absolute;
  left: 718px;
  top: 88px;
  width: 845px;
  height: 985px;
  border: 4px solid #ee4026;
  border-right-width: 3px;
`;

const ROWS = [
  ['Alabama', 30996, 'AL'], ['Alaska', 26356, 'AK'], ['Arizona', 24298, 'AZ'], ['Arkansas', 27319, 'AR'],
  ['California', 21125, 'CA'], ['Colorado', 26424, 'CO'], ['Connecticut', 35853, 'CT'], ['Delaware', 39705, 'DE'],
  ['District of Co...', 32966, 'DC'], ['Florida', 24454, 'FL'], ['Georgia', 27759, 'GA'], ['Hawaii', 24926, 'HI'],
  ['Idaho', 24983, 'ID'], ['Illinois', 28552, 'IL'], ['Indiana', 28521, 'IN'], ['Iowa', 29560, 'IA'],
  ['Kansas', 26002, 'KS'], ['Kentucky', 28356, 'KY'],
];
const BROWSER = [
  ['star', 'Favorites'], ['bookmarks', 'Spatial Bookmarks', 1], ['home', 'Home', 1], ['folder', '/', 1],
  ['folder', '/Volumes', 1], ['geopackage', 'GeoPackage'], ['feather', 'SpatiaLite'], ['elephant', 'PostGIS'],
  ['mssql', 'MSSQL'], ['oracle', 'Oracle'], ['db2', 'DB2'], ['wms', 'WMS/WMTS'], ['vtiles', 'Vector Tiles'],
  ['xyz', 'XYZ Tiles', 1], ['wcs', 'WCS'],
];
const P1 = 53.1;
const P2 = 40.3;

/* A leading "-" marks a disabled tool, "~" one that is only half faded. */
const FADE = { '-': 0.3, '~': 0.48 };
const Tools = ({ list, w, size }) => list.map((t) => {
  const dim = FADE[t[0]];
  return <Slot key={t} $w={w}><Icon name={dim ? t.slice(1) : t} size={size} dim={dim} /></Slot>;
});
const DockButtons = () => (
  <>
    <DockButton viewBox="0 0 18 18" fill="none" stroke="#96918b" strokeWidth="1.300">
      <rect x="1" y="1" width="16" height="16" rx="1.500" /><rect x="4" y="7" width="7" height="7" /><path d="M7 7V4h7v7h-3" />
    </DockButton>
    <DockButton viewBox="0 0 18 18" fill="none" stroke="#96918b" strokeWidth="1.300">
      <rect x="1" y="1" width="16" height="16" rx="1.500" /><path d="M3.500 3.500l11 11M14.500 3.500l-11 11" strokeWidth="2.200" />
    </DockButton>
  </>
);

export default function App() {
  return (
    <Screen>
      <Global />
      <MainWindow>
        <MainTitle>
          <Lights $pad={0} $shift={-7}>
            <Light $color="#594c4b" $cut />
            <Light $color="#594c4b" />
            <Light $color="#594c4b" />
          </Lights>
          <TitleText $m="-8px 0 0 855px" $ls={0.6} $color="#857a78">*Untitled Project — QGIS</TitleText>
        </MainTitle>

        <Toolbar $h={60} $pb={1}>
          <Grip $w={3} $m="0 3px 0 -1px" />
          <Tools w={53.3} list={['newFile', 'open', 'save', 'newLayout', 'wrench', 'style']} />
          <Grip $m="0 6px 0 14px" />
          <ActiveTool><Icon name="hand" /></ActiveTool>
          <Tools w={P1} list={['panSel', 'zoomIn', 'zoomOut', 'zoomFull', '~zoomSel', '~zoomLayer', '~zoomNative', 'zoomPrev', '-zoomNext', 'newMap', 'new3d', 'newBookmark', 'bookmarks', 'clock', 'sync']} />
          <Grip $m="0 4px 0 14px" />
          <Tools w={53.4} list={['~identify', 'table', 'abacus', 'gear', 'sigma', 'ruler']} />
          <Caret $m="0 4px 0 2px" $s={7} />
          <Tools w={53.3} list={['bubble', '~action']} />
          <Caret $m="0 4px 0 0" $s={7} />
          <Tools w={53.3} list={['textNote']} />
          <Caret $m="0 0 0 2px" $s={7} />
        </Toolbar>
        <Divider />
        <Toolbar $h={59} $pb={1}>
          <Grip $w={3} $m="0 3px 0 -1px" />
          <Tools w={53.4} list={['addLayers', 'geopackageNew', 'shapeNew', 'featherNew', 'memory']} />
          <Sep $h={40} $m="0 4px" />
          <Tools w={53.4} list={['meshNew']} />
          <Sep $h={40} $m="0 20px 0 4px" />
          <Grip $m="0 6px 0 0" />
          <Slot $w={52}><Split><Icon name="pencils" dim={0.3} /><Caret $s={5} /></Split></Slot>
          <Tools w={53} list={['-pencil', '-saveEdit', '-addRecord', '-digitize']} />
          <Caret $m="0 4px 0 1px" $s={7} />
          <Tools w={53.2} list={['-multiEdit']} />
        </Toolbar>
        <Divider />
        <Toolbar $h={57}>
          <Grip $w={3} $m="0 3px 0 -1px" />
          <Tools w={54} list={['~selectRect']} />
          <Caret $m="0 4px 0 2px" $s={7} />
          <Tools w={53} list={['selectForm']} />
          <Caret $m="0 4px 0 1px" $s={7} />
          <Tools w={53} list={['deselect']} />
          <Caret $m="0 5px 0 1px" $s={7} />
          <Tools w={53} list={['selectLoc']} />
        </Toolbar>
        <Divider />

        <Work>
          <SidePanel>
            <DockTitle $h={30} $pull={-7}><b>Browser</b><DockButtons /></DockTitle>
            <DockTools $h={51} $pb={3}>
              {['addBrowser', 'sync', 'funnel', 'collapse', 'info'].map((n) => <Icon key={n} name={n} size={24} />)}
            </DockTools>
            <ListFrame $h={421}>
              <Tree>
                {BROWSER.map(([icon, label, open]) => (
                  <TreeRow key={label}>
                    <Expander $on={open} />
                    <Icon name={icon} size={26} />
                    <Label>{label}</Label>
                  </TreeRow>
                ))}
              </Tree>
              <ScrollTrack>
                <ScrollButton><Caret $up /></ScrollButton>
                <Thumb $h={262} />
                <ScrollButton><Caret /></ScrollButton>
              </ScrollTrack>
            </ListFrame>
            <HSplitter><Grip $w={28} $h={4} /></HSplitter>
            <DockTitle $h={30} $pull={-9}><b>Layers</b><DockButtons /></DockTitle>
            <DockTools $h={50} $pb={2}>
              {['brush', 'group', 'eye', 'funnel', 'epsFilter'].map((n) => <Icon key={n} name={n} size={24} />)}
              <Caret $m="0 -2px 0 -5px" />
              {['expand', 'collapse', 'removeLayer'].map((n) => <Icon key={n} name={n} size={24} />)}
            </DockTools>
            <LayerTree>
              <LayerRow $active $ls={1.05}><Icon name="attrLayer" size={25} /><span>student_debt_data</span></LayerRow>
              <LayerRow $ls={0.78}>
                <Check viewBox="0 0 20 20" fill="none" stroke="#dcdcdc" strokeWidth="2"><path d="M4 10.500l4 5.500 7-13" /></Check>
                <Swatch /><span>usa_shapefile</span>
              </LayerRow>
            </LayerTree>
          </SidePanel>
          <VSplitter><Grip $w={3} $h={28} /></VSplitter>
          <Canvas>
            <Speck $x={99} $y={508} />
            <Speck $x={153} $y={528} $w={4} />
            <Speck $x={158} $y={524} $w={1} />
            <Speck $x={195} $y={572} />
          </Canvas>
        </Work>
      </MainWindow>

      <WindowShade />
      <TableWindow>
        <TableTitle>
          <Lights $pad={11}>
            <Light $color="#ed6a5f" />
            <Light $color="#f5bf4f" />
            <Light $color="#62c554" />
          </Lights>
          <TitleText $m="-1px 0 0 205px" $ls={0.79} $color="#b9b1af">student_debt_data — Features Total: 51, Filtered: 51, Selected: 0</TitleText>
        </TableTitle>
        <Toolbar $h={49} $pb={4}>
          <Slot $w={4} />
          <Tools w={P2} size={25} list={['-pencil', '-multiEdit', '-saveEdit', 'sync']} />
          <Sep $h={22} $m="0 4px" />
          <Tools w={P2} size={25} list={['-copy']} />
          <Sep $h={22} $m="0 5px 0 5px" />
          <Tools w={P2} size={25} list={['epsSelect', 'selectAll', 'invert', 'deselectOne', 'funnel', 'moveTop', 'panSel', 'zoomSelOn']} />
          <Sep $h={22} $m="0 5px" />
          <Tools w={P2 - 0.3} size={25} list={['-newField', '-delField', 'editTable', 'abacus']} />
          <Sep $h={22} $m="0 5px" />
          <Tools w={P2} size={25} list={['condFormat']} />
          <Sep $h={22} $m="0 4px 0 5px" />
          <Tools w={P2} size={25} list={['dock', 'actionOn']} />
        </Toolbar>
        <TableArea>
          <GridArea>
            <HeadRow>
              <HeadCell $plain />
              <HeadCell $nudge={3}>State</HeadCell>
              <HeadCell $nudge={3}>average_debt</HeadCell>
              <HeadCell $plain $nudge={2}>abbrev</HeadCell>
            </HeadRow>
            {ROWS.map(([state, debt, abbr], i) => (
              <DataRow key={state} $alt={i % 2 === 1}>
                <RowNo>{i + 1}</RowNo>
                <Cell $sel={i === 0}>{state}</Cell>
                <Cell $right>{debt}</Cell>
                <Cell>{abbr}</Cell>
              </DataRow>
            ))}
          </GridArea>
          <ScrollTrack $w={22}>
            <ScrollButton><Caret $up /></ScrollButton>
            <Thumb $h={277} />
            <ScrollButton><Caret /></ScrollButton>
          </ScrollTrack>
        </TableArea>
        <Foot>
          <ShowAll>
            <Icon name="funnel" size={21} />
            <span>Show All Features</span>
            <Caret $s={5} $m="18px 1px 0 0" />
          </ShowAll>
          <ViewToggle><Icon name="form" size={22} /></ViewToggle>
          <Slot $w={3} />
          <ViewToggle $on><Icon name="table" size={22} /></ViewToggle>
        </Foot>
      </TableWindow>
      <RedFrame />
      <DragTag>HI</DragTag>
    </Screen>
  );
}
